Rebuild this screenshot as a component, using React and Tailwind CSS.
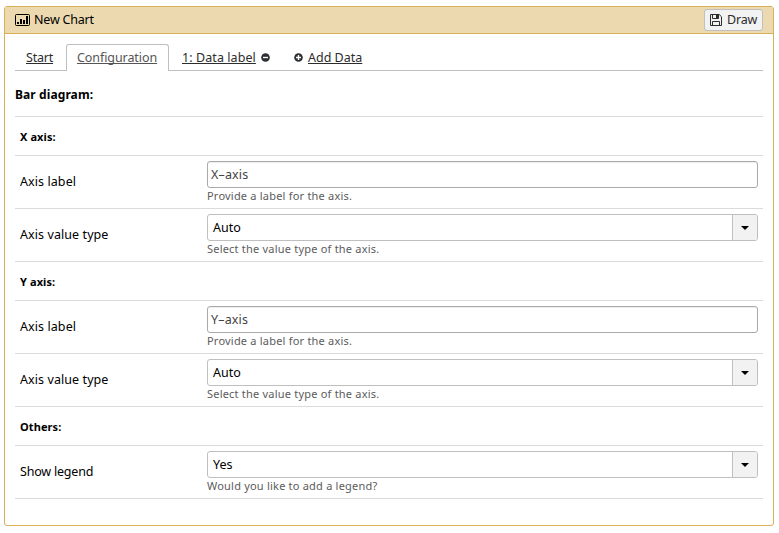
import React from "react";

function ChartIcon() {
  return (
    <svg width="15" height="12" viewBox="0 0 15 12" className="shrink-0" fill="#000">
      <rect x="0.5" y="0.5" width="14" height="11" rx="1" fill="none" stroke="#000" />
      <path d="M2 8h2v2H2zM5 5h2v5H5zM8 6h2v4H8zM11 2h2v8h-2z" />
    </svg>
  );
}

function SaveIcon() {
  return (
    <svg width="12" height="12" viewBox="0 0 12 12" className="shrink-0" fill="none" stroke="#2c2c2c">
      <path d="M.5.5h8.7l2.3 2.3v8.7H.5z" />
      <path d="M2.5 11V7.5h7V11" />
      <path d="M2.5 1v3.5h6V1" />
      <path d="M6 1h2v3H6z" fill="#2c2c2c" stroke="none" />
    </svg>
  );
}

function CircleIcon({ plus }) {
  return (
    <svg width="9" height="9" viewBox="0 0 9 9" className="relative top-[0.5px] shrink-0">
      <circle cx="4.5" cy="4.5" r="4.3" fill="#2c3034" />
      <path d={plus ? "M2 4.5h5M4.5 2v5" : "M2 4.5h5"} stroke="#fff" strokeWidth="1.4" />
    </svg>
  );
}

function Select({ value }) {
  return (
    <div className="flex h-[27px] w-[551px] overflow-hidden rounded-[3px] border border-[#bfbfbf] bg-white">
      <span className="flex-1 pl-[5px] text-[12.5px] leading-[25px] text-black">{value}</span>
      <span className="flex w-[25px] items-center justify-center border-l border-[#bfbfbf] bg-[#f2f2f2]">
        <svg width="8" height="4" viewBox="0 0 8 4">
          <path d="M0 0h8L4 4z" fill="#000" />
        </svg>
      </span>
    </div>
  );
}

function TextInput({ value }) {
  return (
    <input
      defaultValue={value}
      className="block h-[27px] w-[551px] rounded-[3px] border border-[#aaa] bg-white px-[3px] text-[12.5px] tracking-[0.15px] text-[#444] shadow-[inset_0_1px_1px_#eee] outline-none"
    />
  );
}

function Section({ children }) {
  return (
    <div className="h-[39px] border-t border-[#dbdbdb] pl-[5px] text-[11px] leading-[40px] font-bold tracking-[0.1px] text-black">
      {children}
    </div>
  );
}

function Row({ label, help, tracking = "tracking-[0.08px]", children }) {
  return (
    <div className="flex h-[53px] border-t border-[#dbdbdb] pl-[5px]">
      <div className={`w-[187px] text-[12.5px] leading-[52px] text-black ${tracking}`}>{label}</div>
      <div className="pt-[5px]">
        {children}
        <div className="h-4 text-[11px] leading-[15px] tracking-[0.21px] text-[#5c5c5c]">{help}</div>
      </div>
    </div>
  );
}

export default function App() {
  return (
    <div className="h-[533px] w-[779px] overflow-hidden bg-white pt-[6px] pl-1 font-['Noto_Sans','Open_Sans',sans-serif] text-[12.5px]">
      <div className="h-[520px] w-[770px] rounded-[3px] border border-[#d9b058]">
        <div className="flex h-[27px] items-center border-b border-[#d9b058] bg-[#ecd9b0] pr-[10px] pl-[10px]">
          <ChartIcon />
          <span className="ml-1 leading-[26px] tracking-[-0.2px] text-black">New Chart</span>
          <button className="ml-auto flex h-[22px] w-[59px] items-center rounded-[3px] border border-[#bfbfbf] bg-[#f2f2f2] pl-[5px] text-[#2c2c2c]">
            <SaveIcon />
            <span className="ml-[5px] tracking-[-0.2px]">Draw</span>
          </button>
        </div>
        <div className="px-[10px] pt-[10px]">
          <div className="flex h-[27px] border-b border-[#bfbfbf] leading-[27px] text-[#2d2d2d] [text-decoration-skip-ink:none]">
            <a className="ml-[11px] w-[40px] tracking-[-0.2px] underline underline-offset-1">Start</a>
            <a className="h-[27px] w-[103px] rounded-t-[3px] border border-b-0 border-[#bfbfbf] bg-white pl-[10px] leading-[25px] tracking-[-0.08px] text-[#555] underline underline-offset-1">
              Configuration
            </a>
            <div className="ml-[13px] flex w-[88px] items-center justify-between">
              <a className="tracking-[0.08px] underline underline-offset-1">1: Data label</a>
              <CircleIcon />
            </div>
            <div className="ml-6 flex items-center">
              <CircleIcon plus />
              <a className="ml-[5px] underline underline-offset-1">Add Data</a>
            </div>
          </div>
          <div className="h-[45px] text-[12px] leading-[48px] font-bold tracking-[0.1px] text-black">Bar diagram:</div>
          <Section>X axis:</Section>
          <Row label="Axis label" help="Provide a label for the axis.">
            <TextInput value="X–axis" />
          </Row>
          <Row label="Axis value type" help="Select the value type of the axis.">
            <Select value="Auto" />
          </Row>
          <Section>Y axis:</Section>
          <Row label="Axis label" help="Provide a label for the axis.">
            <TextInput value="Y–axis" />
          </Row>
          <Row label="Axis value type" help="Select the value type of the axis.">
            <Select value="Auto" />
          </Row>
          <Section>Others:</Section>
          <Row label="Show legend" help="Would you like to add a legend?" tracking="tracking-[-0.2px]">
            <Select value="Yes" />
          </Row>
          <div className="border-t border-[#dbdbdb]" />
        </div>
      </div>
    </div>
  );
}
